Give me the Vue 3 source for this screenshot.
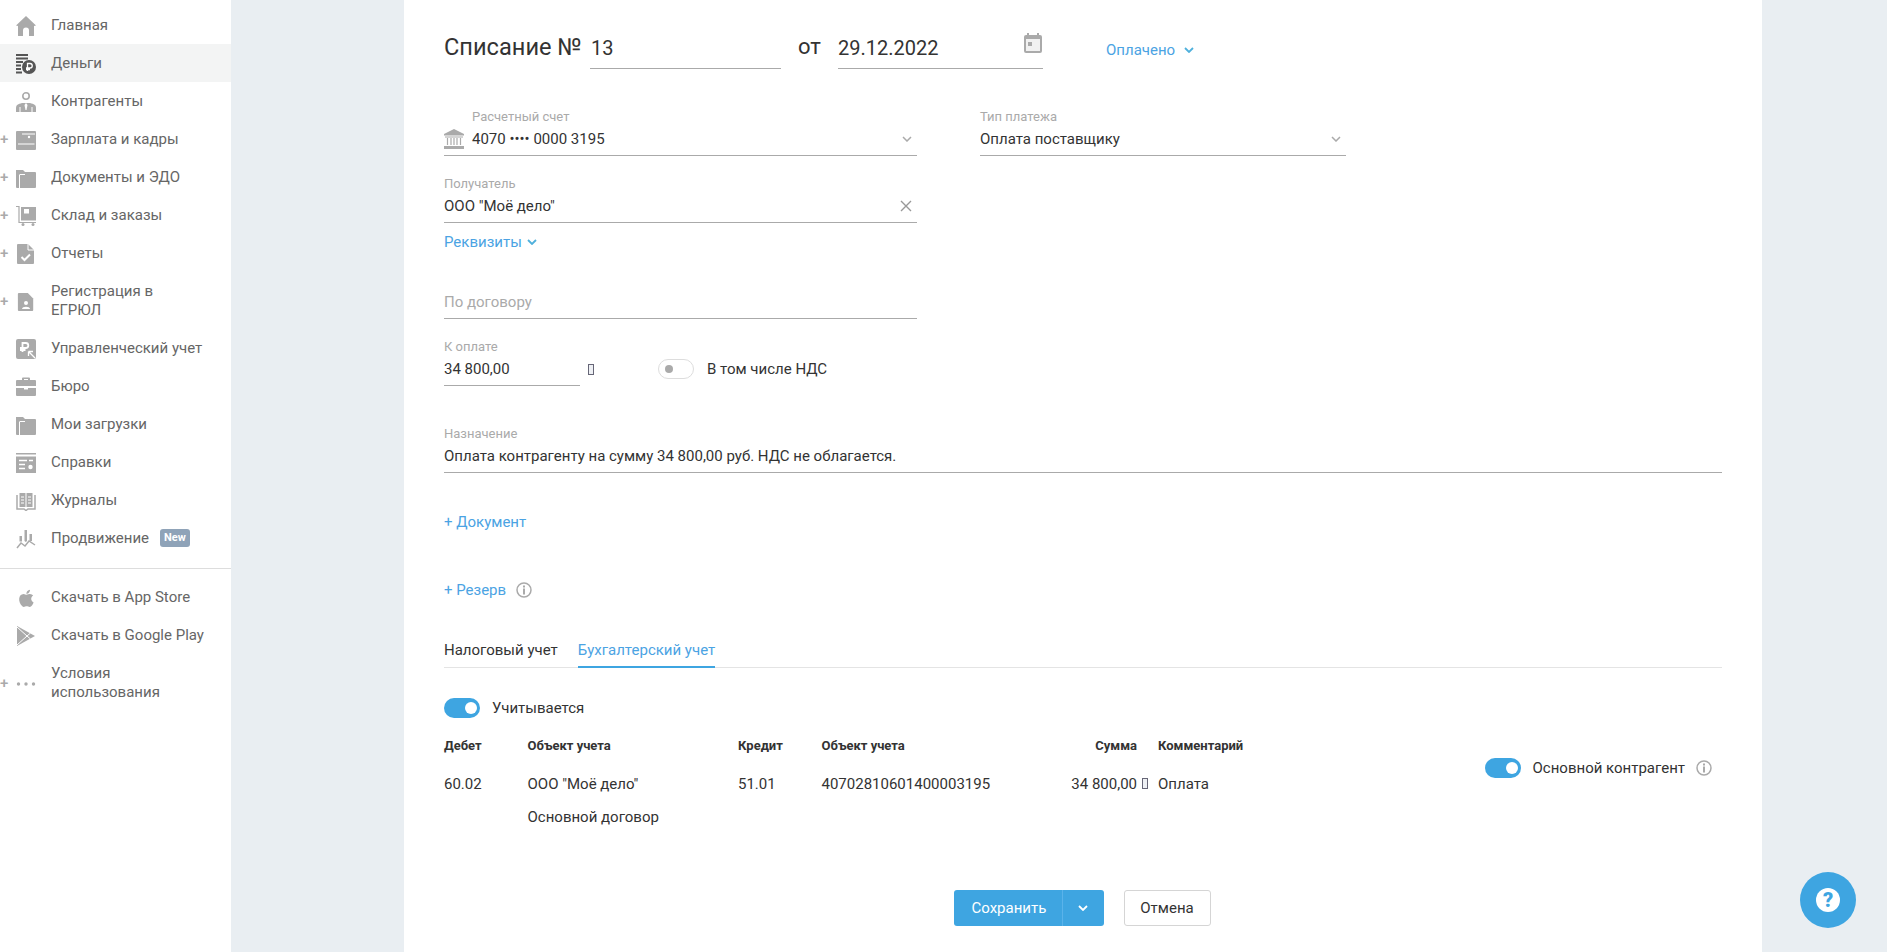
<script setup>
const doc = 'M2 0h10l6 6v13a1 1 0 0 1-1 1H2a1 1 0 0 1-1-1V1a1 1 0 0 1 1-1z'
const folder = '<path d="M0 2h7l2 2h10a1 1 0 0 1 1 1v14a1 1 0 0 1-1 1H1a1 1 0 0 1-1-1z"/><path d="M3.500 7v13M3.500 6.500H9" stroke="#fff" fill="none"/>'
const icons = {
  home: '<path d="M10 0l10 9.500-2 .5v9.500a.5.5 0 0 1-.5.5H13v-5.500a3 3 0 0 0-6 0V20H2.500a.5.5 0 0 1-.5-.5V10L0 9.500z"/>',
  money: '<g fill="#555"><rect width="12" height="2"/><rect y="3.500" width="12" height="2"/><rect y="7" width="7" height="2"/><rect y="10.500" width="5" height="2"/><rect y="14" width="5" height="2"/><rect y="17.500" width="6" height="2"/><circle cx="13" cy="13" r="7"/></g><path d="M11.500 17V9.500h2.500a2 2 0 0 1 0 4.500h-4M10 15.500h4" stroke="#fff" stroke-width="1.300" fill="none"/>',
  person: '<circle cx="10" cy="4" r="3.200" fill="none" stroke="#aaa" stroke-width="1.600"/><path d="M0 20v-4c0-3 2-4 6-5h8c4 1 6 2 6 5v4z"/><path d="M10 11l-1.500 2 1 5h1l1-5z" fill="#fff"/><path d="M4 15v5M16 15v5" stroke="#fff"/>',
  wallet: '<rect y="1" width="20" height="19" rx="1"/><path d="M6 4h13M18.500 14H2" stroke="#fff" fill="none"/><circle cx="13" cy="7" r="1.200" fill="#fff"/>',
  folder,
  store: '<path d="M0 .5h3v16h17" fill="none" stroke="#aaa" stroke-width="1.200"/><rect x="5" y="1" width="15" height="13.500"/><rect x="8" y="3" width="5" height="4.500" fill="#fff"/><circle cx="7" cy="18.500" r="1.500"/><circle cx="17" cy="18.500" r="1.500"/>',
  report: `<path d="${doc}"/><path d="M12 0v6h6" fill="none" stroke="#fff"/><path d="M5.500 13l3 3L14 10.500" stroke="#fff" stroke-width="2" fill="none"/>`,
  reg: `<path transform="translate(1 1) scale(.9)" d="${doc}"/><circle cx="10" cy="11" r="2" fill="#fff"/><path d="M6 17c0-3 8-3 8 0z" fill="#fff"/>`,
  mgmt: '<rect width="20" height="20" rx="2"/><path d="M6.500 13V4h3.300a2.500 2.500 0 0 1 0 5H4M4 11h5.500" stroke="#fff" stroke-width="1.800" fill="none"/><path d="M12.500 12.500l6.500 6.500M12.500 12.500h4.500M12.500 12.500V17" stroke="#fff" stroke-width="1.300" fill="none"/>',
  case: '<path d="M6 3V1.500a1 1 0 0 1 1-1h6a1 1 0 0 1 1 1V3h5a1 1 0 0 1 1 1v5H0V4a1 1 0 0 1 1-1zM8 2v1h4V2z" fill-rule="evenodd"/><path d="M0 11h8v1.500h4V11h8v7a1 1 0 0 1-1 1H1a1 1 0 0 1-1-1z"/>',
  info: '<rect width="20" height="1.500"/><rect y="3.500" width="20" height="16.500"/><path d="M3 7.500h8M3 11.500h6M3 15.500h6M13 7.500h4" stroke="#fff" stroke-width="1.500" fill="none"/><circle cx="14.500" cy="14" r="2.200" fill="#fff"/>',
  book: '<path d="M1 4v14h7l2 1.500 2-1.500h7V4" fill="none" stroke="#aaa" stroke-width="1.500"/><path d="M3.500 2h6v14h-6zM10.500 2h6v14h-6z"/><path d="M5 6h3M5 9h3M5 12h3M12 6h3M12 9h3M12 12h3" stroke="#fff" fill="none"/>',
  promo: '<path d="M3.500 7h2.500v5.500H3.500zM8.500 1h2.500v11l-1.200 1-1.300-1zM13.500 5h2.500v7h-2.500z"/><path d="M1 19l4-5 4 3 4-5 6 4" fill="none" stroke="#aaa" stroke-width="1.500"/>',
  apple: '<path transform="translate(-1 -1) scale(.95)" d="M17.050 20.280c-.98.95-2.050.8-3.080.35-1.090-.46-2.090-.48-3.240 0-1.440.62-2.200.44-3.060-.35C2.790 15.250 3.510 7.590 9.050 7.310c1.350.07 2.290.74 3.080.8 1.180-.24 2.310-.93 3.570-.84 1.510.12 2.650.72 3.400 1.800-3.120 1.870-2.380 5.980.48 7.130-.57 1.500-1.310 2.990-2.540 4.090zM12.030 7.250c-.15-2.230 1.660-4.070 3.740-4.250.29 2.580-2.340 4.500-3.740 4.250z"/>',
  play: '<path d="M1 0l18 10L1 20z"/><path d="M1 1l10 9-10 9M11 10l3.500-3M11 10l3.500 3" stroke="#fff" fill="none"/>',
  dots: '<circle cx="2.500" cy="10" r="1.700"/><circle cx="10" cy="10" r="1.700"/><circle cx="17.500" cy="10" r="1.700"/>'
}
const top = [
  { t: 'Главная', i: 'home' },
  { t: 'Деньги', i: 'money', active: true },
  { t: 'Контрагенты', i: 'person' },
  { t: 'Зарплата и кадры', i: 'wallet', plus: true },
  { t: 'Документы и ЭДО', i: 'folder', plus: true },
  { t: 'Склад и заказы', i: 'store', plus: true },
  { t: 'Отчеты', i: 'report', plus: true },
  { t: 'Регистрация в ЕГРЮЛ', i: 'reg', plus: true, tall: true },
  { t: 'Управленческий учет', i: 'mgmt' },
  { t: 'Бюро', i: 'case' },
  { t: 'Мои загрузки', i: 'folder' },
  { t: 'Справки', i: 'info' },
  { t: 'Журналы', i: 'book' },
  { t: 'Продвижение', i: 'promo', badge: 'New' }
]
const bottom = [
  { t: 'Скачать в App Store', i: 'apple' },
  { t: 'Скачать в Google Play', i: 'play' },
  { t: 'Условия использования', i: 'dots', plus: true, tall: true }
]
const nav = [top, bottom]
</script>

<template>
  <div class="page">
    <aside class="side">
      <template v-for="(group, g) in nav" :key="g">
        <hr v-if="g" class="side-line" />
        <div
          v-for="item in group"
          :key="item.t"
          class="nav"
          :class="{ active: item.active, tall: item.tall }"
        >
          <span class="plus">{{ item.plus ? '+' : '' }}</span>
          <svg class="nav-ico" viewBox="0 0 20 20" fill="#aaa" v-html="icons[item.i]"></svg>
          <span class="nav-text">{{ item.t }}</span>
          <span v-if="item.badge" class="badge">{{ item.badge }}</span>
        </div>
      </template>
    </aside>

    <main class="main">
      <div class="head">
        <div class="title">Списание №</div>
        <div class="head-input num">13</div>
        <div class="from">от</div>
        <div class="head-input date">
          <span>29.12.2022</span>
          <svg width="18" height="20" viewBox="0 0 18 20" fill="#aaa">
            <rect y="2" width="18" height="18" rx="2" />
            <rect x="3" width="2" height="3" />
            <rect x="13" width="2" height="3" />
            <rect x="2" y="6" width="14" height="12" fill="#f1f1f1" />
            <rect x="4" y="9" width="4" height="4" />
          </svg>
        </div>
        <div class="link status">
          Оплачено
          <svg class="chev" width="10" height="6" viewBox="0 0 10 6"><path d="M1 1l4 4 4-4" /></svg>
        </div>
      </div>

      <div class="row-two">
        <div class="field account">
          <div class="label pad">Расчетный счет</div>
          <div class="value">
            <svg class="bank" width="20" height="20" viewBox="0 0 20 20" fill="#aaa">
              <path d="M10 0l10 5v1.500H0V5z" />
              <rect x="1" y="7.500" width="18" height="1" />
              <path d="M3.500 9v7M7 9v7M10 9v7M13 9v7M16.500 9v7" stroke="#aaa" stroke-width="1.200" />
              <rect y="17" width="20" height="3" />
            </svg>
            <span>4070 •••• 0000 3195</span>
            <svg class="chev grey end" width="10" height="6" viewBox="0 0 10 6"><path d="M1 1l4 4 4-4" /></svg>
          </div>
        </div>
        <div class="field ptype">
          <div class="label">Тип платежа</div>
          <div class="value">
            <span>Оплата поставщику</span>
            <svg class="chev grey end" width="10" height="6" viewBox="0 0 10 6"><path d="M1 1l4 4 4-4" /></svg>
          </div>
        </div>
      </div>

      <div class="field account gap21">
        <div class="label">Получатель</div>
        <div class="value">
          <span>ООО "Моё дело"</span>
          <svg class="end" width="12" height="12" viewBox="0 0 12 12"><path d="M1 1l10 10M11 1L1 11" stroke="#999" stroke-width="1.400" /></svg>
        </div>
      </div>
      <div class="link details">
        Реквизиты
        <svg class="chev" width="10" height="6" viewBox="0 0 10 6"><path d="M1 1l4 4 4-4" /></svg>
      </div>

      <div class="field account gap21">
        <div class="label"></div>
        <div class="value placeholder">По договору</div>
      </div>

      <div class="pay-row">
        <div class="field sum">
          <div class="label">К оплате</div>
          <div class="value">34 800,00</div>
        </div>
        <i class="tofu pay-tofu"></i>
        <span class="switch off"></span>
        <span class="pay-text">В том числе НДС</span>
      </div>

      <div class="field purpose">
        <div class="label">Назначение</div>
        <div class="value">Оплата контрагенту на сумму 34 800,00 руб. НДС не облагается.</div>
      </div>

      <div class="link add doc">+ Документ</div>
      <div class="link add reserve">
        + Резерв
        <svg class="info-ico" width="16" height="16" viewBox="0 0 16 16">
          <circle cx="8" cy="8" r="7" fill="none" stroke="#aaa" stroke-width="1.500" />
          <rect x="7" y="3.500" width="2" height="2" fill="#aaa" />
          <rect x="7" y="6.500" width="2" height="6" fill="#aaa" />
        </svg>
      </div>

      <div class="tabs">
        <div class="tab">Налоговый учет</div>
        <div class="tab current">Бухгалтерский учет</div>
      </div>

      <div class="accounted">
        <span class="switch on"></span>
        <span>Учитывается</span>
      </div>

      <div class="postings">
        <div class="grid">
          <b>Дебет</b>
          <b>Объект учета</b>
          <b>Кредит</b>
          <b>Объект учета</b>
          <b class="right">Сумма</b>
          <b>Комментарий</b>

          <span>60.02</span>
          <span>ООО "Моё дело"</span>
          <span>51.01</span>
          <span>40702810601400003195</span>
          <span class="right">34 800,00<i class="tofu grid-tofu"></i></span>
          <span>Оплата</span>

          <span></span>
          <span>Основной договор</span>
        </div>
        <div class="main-party">
          <span class="switch on"></span>
          <span class="party-text">Основной контрагент</span>
          <svg width="16" height="16" viewBox="0 0 16 16">
            <circle cx="8" cy="8" r="7" fill="none" stroke="#aaa" stroke-width="1.500" />
            <rect x="7" y="3.500" width="2" height="2" fill="#aaa" />
            <rect x="7" y="6.500" width="2" height="6" fill="#aaa" />
          </svg>
        </div>
      </div>

      <div class="actions">
        <div class="save">
          <span class="save-text">Сохранить</span>
          <span class="save-more">
            <svg width="10" height="6" viewBox="0 0 10 6"><path d="M1 1l4 4 4-4" fill="none" stroke="#fff" stroke-width="1.800" /></svg>
          </span>
        </div>
        <div class="cancel">Отмена</div>
      </div>
    </main>

    <div class="help"><span class="help-mark">?</span></div>
  </div>
</template>

<style scoped>
.page {
  display: flex;
  height: 952px;
  overflow: hidden;
  background: #e9eef2;
  font-family: Roboto, sans-serif;
  font-size: 15px;
  line-height: 20px;
  color: #333;
}
.side {
  width: 231px;
  flex: none;
  background: #fff;
  padding-top: 6px;
  box-sizing: border-box;
}
.nav {
  display: flex;
  align-items: center;
  height: 38px;
  color: #666;
}
.nav.tall { height: 57px; }
.nav.active { background: #f3f4f4; }
.plus {
  width: 16px;
  flex: none;
  color: #aaa;
  font-size: 15px;
  font-weight: 500;
}
.nav-ico {
  width: 20px;
  height: 20px;
  flex: none;
  margin-top: 2px;
  margin-right: 15px;
}
.nav-text {
  line-height: 19px;
  width: 130px;
  flex: none;
}
.nav:not(.tall) .nav-text { width: auto; white-space: nowrap; }
.badge {
  margin-left: 11px;
  height: 18px;
  padding: 0 4px;
  border-radius: 3px;
  background: #8fa3b8;
  color: #fff;
  font-size: 11px;
  font-weight: 700;
  line-height: 18px;
}
.side-line {
  border: 0;
  border-top: 1px solid #ddd;
  margin: 11px 0 9px;
}

.main {
  width: 1358px;
  margin-left: 173px;
  flex: none;
  background: #fff;
  padding: 0 40px;
  box-sizing: border-box;
}
.head {
  display: flex;
  align-items: flex-end;
  height: 69px;
}
.title {
  width: 146px;
  flex: none;
  font-size: 23.600px;
  line-height: 28px;
  margin-bottom: 8px;
  white-space: nowrap;
}
.head-input {
  height: 33px;
  box-sizing: border-box;
  border-bottom: 1px solid #aaa;
  font-size: 20px;
  line-height: 24px;
  padding-top: 0;
}
.num { width: 191px; padding-left: 1px; }
.from {
  width: 57px;
  padding-left: 17px;
  box-sizing: border-box;
  font-size: 22px;
  line-height: 28px;
  margin-bottom: 8px;
}
.date {
  width: 205px;
  display: flex;
  justify-content: space-between;
  padding-right: 1px;
}
.date svg { margin-top: -3px; }
.link { color: #4ba3e3; }
.status { margin: 0 0 9px 63px; }
.chev { fill: none; stroke: #4fb0dc; stroke-width: 1.800; margin-left: 3px; vertical-align: 2px; }
.status .chev { margin-left: 5px; }
.details .chev { margin-left: 1px; }
.chev.grey { stroke: #aaa; stroke-width: 1.500; }

.row-two {
  display: flex;
  gap: 63px;
  margin-top: 41px;
}
.field {
  height: 46px;
  box-sizing: border-box;
  border-bottom: 1px solid #aaa;
}
.account { width: 473px; }
.ptype { width: 366px; }
.gap21 { margin-top: 21px; }
.label {
  height: 14px;
  font-size: 13px;
  line-height: 14px;
  color: #aaa;
}
.label.pad { padding-left: 28px; }
.value {
  display: flex;
  align-items: center;
  height: 20px;
  margin-top: 5px;
  white-space: nowrap;
}
.bank { margin-right: 8px; flex: none; }
.chev.end, .end { margin-left: auto; margin-right: 5px; }
.placeholder { color: #aaa; }
.details { margin-top: 9px; }

.pay-row {
  display: flex;
  align-items: center;
  margin-top: 21px;
}
.sum { width: 136px; flex: none; }
.tofu {
  display: inline-block;
  width: 6px;
  height: 11px;
  box-sizing: border-box;
  border: 1px solid #667;
  background: #eef0f4;
}
.pay-tofu { margin-left: 8px; margin-top: 12px; }
.switch {
  position: relative;
  display: inline-block;
  width: 36px;
  height: 20px;
  box-sizing: border-box;
  border-radius: 10px;
  flex: none;
}
.switch::after {
  content: '';
  position: absolute;
  border-radius: 50%;
}
.switch.off {
  border: 1px solid #ddd;
  background: #fff;
  margin-left: 64px;
  margin-top: 12px;
}
.switch.off::after {
  left: 6px;
  top: 5px;
  width: 8px;
  height: 8px;
  background: #aaa;
}
.switch.on { background: #3ea5e1; }
.switch.on::after {
  left: 21px;
  top: 4px;
  width: 12px;
  height: 12px;
  background: #fff;
}
.pay-text { margin: 12px 0 0 13px; }

.purpose { margin-top: 41px; }
.add.doc { margin-top: 39px; }
.add.reserve { margin-top: 48px; display: flex; align-items: center; }
.info-ico { margin-left: 10px; }

.tabs {
  display: flex;
  gap: 20px;
  height: 28px;
  margin-top: 40px;
  border-bottom: 1px solid #e4e4e4;
  box-sizing: border-box;
}
.tab { height: 27px; }
.tab.current {
  color: #4ba3e3;
  border-bottom: 2px solid #3ea5e1;
  height: 28px;
  box-sizing: border-box;
}
.accounted {
  display: flex;
  align-items: center;
  gap: 12px;
  margin-top: 30px;
}

.postings {
  display: flex;
  justify-content: space-between;
  margin-top: 18px;
}
.grid {
  display: grid;
  grid-template-columns: 83.500px 210.500px 83.500px 200.500px 136px 1fr;
  grid-auto-rows: 20px;
  row-gap: 18px;
  width: 860px;
}
.grid b { font-size: 13px; font-weight: 700; white-space: nowrap; }
.grid > span { white-space: nowrap; }
.grid > :nth-child(n + 13) { margin-top: -5px; }
.right { text-align: right; padding-right: 21px; position: relative; }
.grid-tofu { position: absolute; right: 10px; top: 4px; }
.main-party {
  display: flex;
  align-items: center;
  height: 20px;
  margin: 22px 10px 0 0;
}
.party-text { margin: 0 11px 0 12px; }

.actions {
  display: flex;
  justify-content: center;
  gap: 20px;
  margin-top: 58px;
  padding-right: 2px;
}
.save {
  display: flex;
  height: 36px;
  width: 150px;
  border-radius: 3px;
  background: #3ea5e1;
  color: #fff;
  line-height: 36px;
}
.save-text {
  width: 109px;
  padding-left: 18px;
  box-sizing: border-box;
  border-right: 1px solid #5ab3ea;
}
.save-more {
  flex: 1;
  display: flex;
  align-items: center;
  justify-content: center;
}
.cancel {
  width: 87px;
  height: 36px;
  box-sizing: border-box;
  border: 1px solid #d5d5d5;
  border-radius: 3px;
  text-align: center;
  line-height: 34px;
}
.help {
  position: fixed;
  left: 1800px;
  top: 872px;
  width: 56px;
  height: 56px;
  border-radius: 50%;
  background: #3ea5e1;
  display: flex;
  align-items: center;
  justify-content: center;
}
.help-mark {
  width: 24px;
  height: 24px;
  border-radius: 50%;
  background: #fff;
  color: #3ea5e1;
  font-size: 20px;
  font-weight: 900;
  line-height: 24px;
  text-align: center;
}
</style>

<style>
body { margin: 0; }
</style>
